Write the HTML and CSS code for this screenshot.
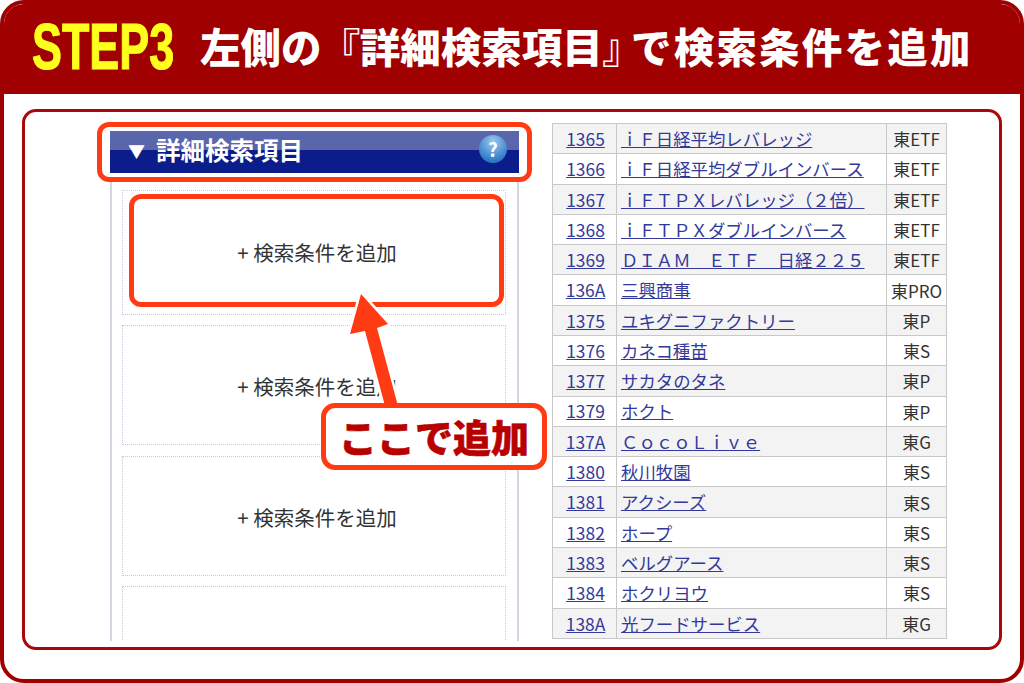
FILE: index.html
```html
<!DOCTYPE html>
<html lang="ja">
<head>
    <meta charset="UTF-8">
    <title>STEP3</title>
    <link rel="stylesheet" href="styles.css">
</head>
<body>
    <div class="frame">
        <div class="title-bar">
            <span class="step"><span class="step-text">STEP3</span></span>
            <h1>左側の<span class="bracket-open">『</span>詳細検索項目<span class="bracket-close">』</span><span class="title-tail">で検索条件を追加</span></h1>
        </div>
        <div class="panel">
            <div class="search-col">
                <div class="head-mark">
                    <div class="head-bar">
                        <span class="head-label"><span class="head-arrow">▼</span>詳細検索項目</span>
                        <span class="help">?</span>
                    </div>
                </div>
                <div class="slots">
                    <div class="slot first"><span class="slot-mark"></span>+ 検索条件を追加</div>
                    <div class="slot">+ 検索条件を追加</div>
                    <div class="slot">+ 検索条件を追加</div>
                    <div class="slot"></div>
                </div>
            </div>
            <table class="stocks">
                <colgroup><col class="c-code"><col class="c-name"><col class="c-market"></colgroup>
                <tr><td class="code"><a href="#">1365</a></td><td><a href="#">ｉＦ日経平均レバレッジ</a></td><td class="market">東ETF</td></tr>
                <tr><td class="code"><a href="#">1366</a></td><td><a href="#">ｉＦ日経平均ダブルインバース</a></td><td class="market">東ETF</td></tr>
                <tr><td class="code"><a href="#">1367</a></td><td><a href="#">ｉＦＴＰＸレバレッジ（２倍）</a></td><td class="market">東ETF</td></tr>
                <tr><td class="code"><a href="#">1368</a></td><td><a href="#">ｉＦＴＰＸダブルインバース</a></td><td class="market">東ETF</td></tr>
                <tr><td class="code"><a href="#">1369</a></td><td><a href="#">ＤＩＡＭ　ＥＴＦ　日経２２５</a></td><td class="market">東ETF</td></tr>
                <tr><td class="code"><a href="#">136A</a></td><td><a href="#">三興商事</a></td><td class="market">東PRO</td></tr>
                <tr><td class="code"><a href="#">1375</a></td><td><a href="#">ユキグニファクトリー</a></td><td class="market">東P</td></tr>
                <tr><td class="code"><a href="#">1376</a></td><td><a href="#">カネコ種苗</a></td><td class="market">東S</td></tr>
                <tr><td class="code"><a href="#">1377</a></td><td><a href="#">サカタのタネ</a></td><td class="market">東P</td></tr>
                <tr><td class="code"><a href="#">1379</a></td><td><a href="#">ホクト</a></td><td class="market">東P</td></tr>
                <tr><td class="code"><a href="#">137A</a></td><td><a href="#">ＣｏｃｏＬｉｖｅ</a></td><td class="market">東G</td></tr>
                <tr><td class="code"><a href="#">1380</a></td><td><a href="#">秋川牧園</a></td><td class="market">東S</td></tr>
                <tr><td class="code"><a href="#">1381</a></td><td><a href="#">アクシーズ</a></td><td class="market">東S</td></tr>
                <tr><td class="code"><a href="#">1382</a></td><td><a href="#">ホープ</a></td><td class="market">東S</td></tr>
                <tr><td class="code"><a href="#">1383</a></td><td><a href="#">ベルグアース</a></td><td class="market">東S</td></tr>
                <tr><td class="code"><a href="#">1384</a></td><td><a href="#">ホクリヨウ</a></td><td class="market">東S</td></tr>
                <tr><td class="code"><a href="#">138A</a></td><td><a href="#">光フードサービス</a></td><td class="market">東G</td></tr>
            </table>
        </div>
        <svg class="arrow" width="70" height="125" viewBox="0 0 70 125">
            <polygon points="21,5 10,45 25,42 45,117 58,117 37,39 48,35" fill="#ff3b14" stroke="#fff" stroke-width="5" stroke-linejoin="round" paint-order="stroke"/>
        </svg>
        <div class="callout">ここで追加</div>
    </div>
</body>
</html>
```

FILE: styles.css
```css
* {
    box-sizing: border-box;
}
body {
    margin: 0;
    font-family: "Noto Sans CJK JP", "Noto Sans", sans-serif;
    background: #fff;
    color: #333;
}
.frame {
    position: relative;
    width: 1024px;
    height: 683px;
    border: 4px solid #a00000;
    border-radius: 24px;
    background: #fff;
    overflow: hidden;
}
.title-bar {
    display: flex;
    align-items: center;
    height: 90px;
    padding: 0 0 6px 28px;
    background: #a00000;
}
.step {
    flex: none;
    width: 168px;
    line-height: 1;
}
.step-text {
    display: inline-block;
    font-family: "Liberation Sans", sans-serif;
    font-size: 65px;
    font-weight: 700;
    color: #ffff1e;
    -webkit-text-stroke: 1.2px #ffff1e;
    transform: scaleX(0.69);
    transform-origin: left center;
}
h1 {
    display: flex;
    margin: 0;
    font-size: 40.5px;
    font-weight: 900;
    line-height: 1;
    color: #fff;
    white-space: nowrap;
}
.bracket-open,
.bracket-close {
    font-weight: 500;
    font-feature-settings: "palt";
}
.bracket-open {
    margin-left: 18px;
}
.bracket-close {
    margin-right: 8px;
}
.title-tail {
    letter-spacing: 2.2px;
}
.panel {
    display: flex;
    align-items: flex-start;
    height: 541px;
    margin: 15px 18px 0;
    padding: 10px 0 6px 72px;
    border: 3px solid #a80808;
    border-radius: 14px;
}
.search-col {
    display: flex;
    flex-direction: column;
    width: 435px;
    height: 100%;
}
.head-mark {
    height: 60px;
    padding: 4px 8px;
    border: 5px solid #ff3b14;
    border-radius: 12px;
}
.head-bar {
    display: flex;
    align-items: center;
    justify-content: space-between;
    height: 42px;
    padding: 0 12px 4px 18px;
    background: linear-gradient(#5a66ac 0, #5a66ac 45%, #0b1d8b 45%, #0b1d8b 100%);
}
.head-label {
    display: flex;
    align-items: center;
    font-size: 24.5px;
    font-weight: 700;
    line-height: 1;
    color: #fff;
}
.head-arrow {
    width: 28px;
    font-size: 17px;
}
.help {
    width: 28px;
    height: 28px;
    margin-top: -2px;
    border-radius: 50%;
    background: radial-gradient(circle at 50% 25%, #9cc9f0, #2d78c4 75%);
    color: #fff;
    font-size: 19px;
    font-weight: 700;
    line-height: 27px;
    text-align: center;
}
.slots {
    flex: 1;
    display: flex;
    flex-direction: column;
    gap: 10.5px;
    width: 409px;
    margin-left: 13px;
    padding: 8px 11px 0 10px;
    border-left: 2px solid #d0d6e0;
    border-right: 2px solid #d0d6e0;
    overflow: hidden;
}
.slot {
    position: relative;
    flex: none;
    display: flex;
    align-items: center;
    justify-content: center;
    height: 120px;
    padding: 2px 0 0 6px;
    border: 1px dotted #c4cad8;
    font-size: 20.5px;
    color: #333;
}
.slot.first {
    height: 124.5px;
    padding-top: 0;
    isolation: isolate;
}
.slot-mark {
    position: absolute;
    left: 6px;
    top: 3px;
    width: 375px;
    height: 113px;
    border: 5px solid #ff3b14;
    border-radius: 12px;
    background: #fff;
    z-index: -1;
}
.stocks {
    width: 395px;
    height: 516px;
    margin: 1px 0 0 20px;
    border-collapse: collapse;
    table-layout: fixed;
    font-size: 17.4px;
}
.c-code {
    width: 64px;
}
.c-market {
    width: 60px;
}
.stocks td {
    padding: 0 0 0 4px;
    border: 1px solid #c8c8c8;
    line-height: 1;
    white-space: nowrap;
    overflow: hidden;
}
.stocks tr:nth-child(odd) td {
    background: #f3f3f3;
}
.stocks tr:nth-child(even) td {
    background: #fff;
}
.stocks a {
    color: #33399a;
}
.stocks .code {
    text-align: center;
    padding: 0 0 0 2px;
}
.stocks .market {
    text-align: center;
    padding: 0;
    font-size: 17px;
    color: #333;
}
.arrow {
    position: absolute;
    left: 336px;
    top: 285px;
}
.callout {
    position: absolute;
    left: 317px;
    top: 399px;
    width: 226px;
    height: 67px;
    border: 5px solid #ff3b14;
    border-radius: 14px;
    background: #fff;
    color: #b80000;
    font-size: 38px;
    font-weight: 900;
    line-height: 56px;
    text-align: center;
    -webkit-text-stroke: 0.6px #b80000;
}
```
